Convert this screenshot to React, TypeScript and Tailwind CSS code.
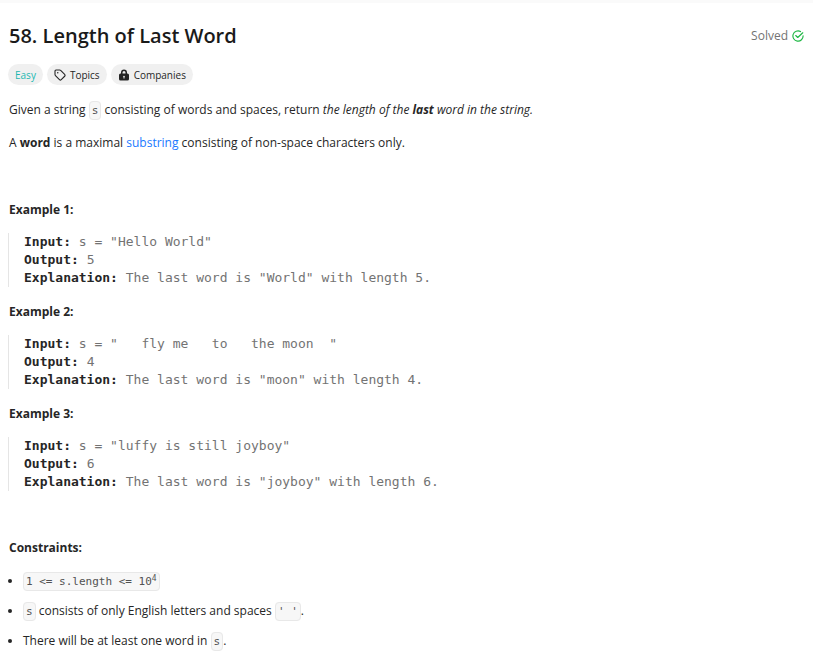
import type { ReactNode } from "react";

function Code({ children }: { children: ReactNode }) {
  return (
    <code className="rounded-[4px] border border-[#e8e8e8] bg-[#f7f7f7] px-[2px] py-[2px] font-['DejaVu_Sans_Mono',monospace] text-[11px] leading-4 text-[#525252]">
      {children}
    </code>
  );
}

function TagIcon() {
  return (
    <svg viewBox="0 0 24 24" className="size-3" fill="none" stroke="currentColor" strokeWidth="2.2" strokeLinejoin="round" aria-hidden="true">
      <path d="M2 4a2 2 0 0 1 2-2h7.2a3 3 0 0 1 2.1.9l8 8a2.6 2.6 0 0 1 0 3.6l-6.8 6.8a2.6 2.6 0 0 1-3.6 0l-8-8a3 3 0 0 1-.9-2.1Z" />
      <circle cx="7.5" cy="7.5" r="1.5" fill="currentColor" stroke="none" />
    </svg>
  );
}

function LockIcon() {
  return (
    <svg viewBox="0 0 24 24" className="size-3" aria-hidden="true">
      <path fill="currentColor" fillRule="evenodd" d="M6 9V7a6 6 0 1 1 12 0v2h1a3 3 0 0 1 3 3v8a3 3 0 0 1-3 3H5a3 3 0 0 1-3-3v-8a3 3 0 0 1 3-3Zm3 0h6V7a3 3 0 0 0-6 0Zm3 4.5a1.7 1.7 0 0 0-1 3.1V19h2v-2.4a1.7 1.7 0 0 0-1-3.1Z" />
    </svg>
  );
}

function SolvedIcon() {
  return (
    <svg viewBox="0 0 24 24" className="size-3" fill="none" stroke="#1fb845" strokeWidth="2.3" strokeLinecap="round" strokeLinejoin="round" aria-hidden="true">
      <path d="M17 3.2A10.2 10.2 0 1 0 22.2 11.5" />
      <path d="m7.5 11 4 4L21.5 5.5" />
    </svg>
  );
}

const examples = [
  { input: 's = "Hello World"', output: "5", explanation: 'The last word is "World" with length 5.' },
  { input: 's = "   fly me   to   the moon  "', output: "4", explanation: 'The last word is "moon" with length 4.' },
  { input: 's = "luffy is still joyboy"', output: "6", explanation: 'The last word is "joyboy" with length 6.' },
];

const pill = "flex h-[21px] items-center gap-1 rounded-full bg-[#f0f0f0] px-[7px] text-[10px] leading-4";

export default function App() {
  return (
    <main className="border-t-[3px] border-[#fafafa] bg-white px-[9px] pt-[19px] pb-3 font-['Open_Sans','Noto_Sans',sans-serif] text-xs leading-5 text-[#262626]">
      <header className="flex items-center justify-between">
        <h1 className="text-xl leading-7 font-semibold text-[#1a1a1a]">58. Length of Last Word</h1>
        <div className="flex items-center gap-1 text-[#737373]">
          Solved
          <SolvedIcon />
        </div>
      </header>

      <div className="-ml-px mt-[14px] flex gap-1">
        <span className={`${pill} text-[#1cb8b0]`}>Easy</span>
        <button type="button" className={pill}>
          <TagIcon />
          Topics
        </button>
        <button type="button" className={pill}>
          <LockIcon />
          Companies
        </button>
      </div>

      <div className="mt-[15px]">
        <p className="mb-[13px]">
          Given a string <Code>s</Code> consisting of words and spaces, return{" "}
          <em>
            the length of the <strong>last</strong> word in the string.
          </em>
        </p>
        <p className="mb-[47px]">
          A <strong>word</strong> is a maximal{" "}
          <a href="#substring" className="text-[#1a7aff]">substring</a> consisting of non-space characters only.
        </p>

        {examples.map((example, index) => (
          <section key={example.output}>
            <h2 className="mb-[13px] font-bold">Example {index + 1}:</h2>
            <pre className="-ml-px mb-[15px] border-l border-[#e5e5e5] pl-[15px] font-['DejaVu_Sans_Mono',monospace] text-[13px] leading-[18px] text-[#737373]">
              <strong className="text-[#262626]">Input:</strong> {example.input}
              {"\n"}
              <strong className="text-[#262626]">Output:</strong> {example.output}
              {"\n"}
              <strong className="text-[#262626]">Explanation:</strong> {example.explanation}
            </pre>
          </section>
        ))}

        <h2 className="mt-[47px] mb-[13px] font-bold">Constraints:</h2>
        <ul className="list-disc space-y-[10px] pl-[14px]">
          <li>
            <Code>
              1 &lt;= s.length &lt;= 10<sup className="text-[8px]">4</sup>
            </Code>
          </li>
          <li>
            <Code>s</Code> consists of only English letters and spaces <Code>' '</Code>.
          </li>
          <li>
            There will be at least one word in <Code>s</Code>.
          </li>
        </ul>
      </div>
    </main>
  );
}
